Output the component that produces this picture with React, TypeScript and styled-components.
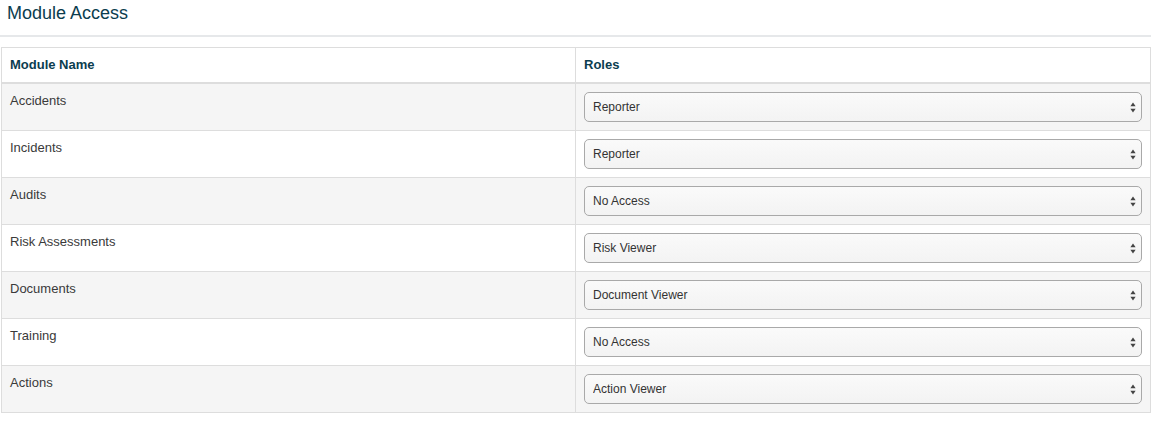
import styled, { createGlobalStyle } from "styled-components";

const GlobalStyle = createGlobalStyle`
  body {
    margin: 0;
    background: #fff;
    font-family: "Liberation Sans", Arial, sans-serif;
    color: #333;
  }
`;

const Page = styled.div`
  padding: 0 3px 0 1px;
`;

const Header = styled.div`
  margin-left: -1px;
  padding: 3px 0 12px 7px;
  border-bottom: 2px solid #e6e8ea;
  margin-bottom: 10px;
`;

const Title = styled.h2`
  margin: 0;
  font-size: 18px;
  line-height: 20px;
  font-weight: normal;
  color: #0b3d4f;
`;

const Table = styled.table`
  width: 1150px;
  border-collapse: collapse;
  border: 1px solid #ddd;
  font-size: 13px;
`;

const HeadCell = styled.th`
  text-align: left;
  padding: 8px;
  line-height: 18px;
  font-weight: bold;
  color: #0b3d4f;
  border-bottom: 2px solid #ddd;
  border-left: 1px solid #ddd;
  height: 18px;
`;

const Row = styled.tr<{ $striped: boolean }>`
  background: ${(p) => (p.$striped ? "#f5f5f5" : "#fff")};
  border-top: 1px solid #ddd;
`;

const Cell = styled.td`
  padding: 8px;
  line-height: 18px;
  vertical-align: top;
  border-left: 1px solid #ddd;
  color: #3a3a3a;
`;

const SelectWrap = styled.div`
  position: relative;
  height: 30px;
`;

const Select = styled.select`
  appearance: none;
  -webkit-appearance: none;
  width: 100%;
  height: 30px;
  padding: 0 24px 0 8px;
  font-family: "Liberation Sans", Arial, sans-serif;
  font-size: 12px;
  color: #333;
  background: linear-gradient(#fafafa, #f3f3f3);
  border: 1px solid #a9a9a9;
  border-radius: 5px;
  outline: none;
`;

const Arrows = styled.svg`
  position: absolute;
  right: 6px;
  top: 10px;
  pointer-events: none;
`;

const roles = ["Reporter", "No Access", "Risk Viewer", "Document Viewer", "Action Viewer"];

const modules = [
  { name: "Accidents", role: "Reporter" },
  { name: "Incidents", role: "Reporter" },
  { name: "Audits", role: "No Access" },
  { name: "Risk Assessments", role: "Risk Viewer" },
  { name: "Documents", role: "Document Viewer" },
  { name: "Training", role: "No Access" },
  { name: "Actions", role: "Action Viewer" },
];

const RoleSelect = ({ value }: { value: string }) => (
  <SelectWrap>
    <Select defaultValue={value}>
      {roles.map((r) => (
        <option key={r}>{r}</option>
      ))}
    </Select>
    <Arrows width="6" height="11" viewBox="0 0 6 11">
      <path d="M3 0.5 L5.6 4.3 L0.4 4.3 Z" fill="#444" />
      <path d="M3 10.5 L5.6 6.7 L0.4 6.7 Z" fill="#444" />
    </Arrows>
  </SelectWrap>
);

const App = () => {
  return (
    <Page>
      <GlobalStyle />
      <Header>
        <Title>Module Access</Title>
      </Header>
      <Table>
        <colgroup>
          <col style={{ width: "574px" }} />
          <col />
        </colgroup>
        <thead>
          <tr>
            <HeadCell>Module Name</HeadCell>
            <HeadCell>Roles</HeadCell>
          </tr>
        </thead>
        <tbody>
          {modules.map((m, i) => (
            <Row key={m.name} $striped={i % 2 === 0}>
              <Cell>{m.name}</Cell>
              <Cell>
                <RoleSelect value={m.role} />
              </Cell>
            </Row>
          ))}
        </tbody>
      </Table>
    </Page>
  );
};

export default App;
